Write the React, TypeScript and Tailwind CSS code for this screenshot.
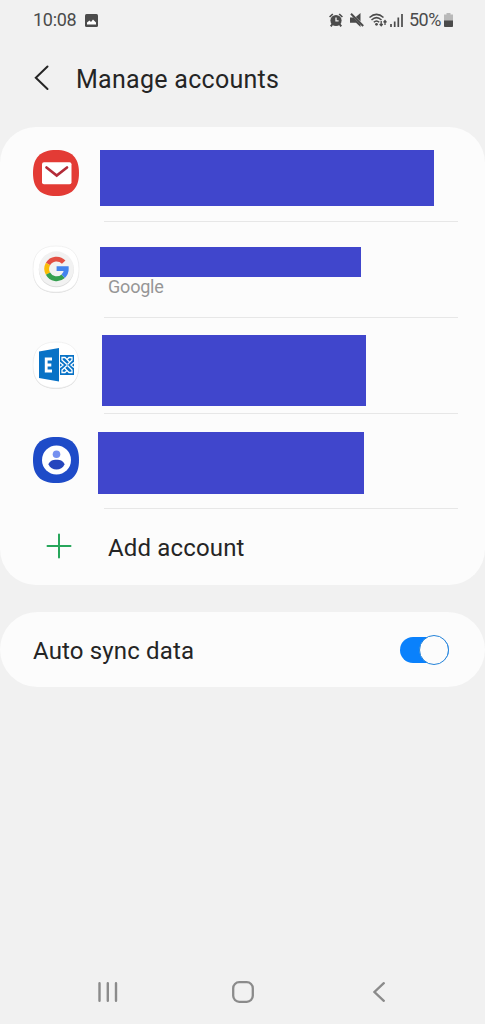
import React from "react";

const SQUIRCLE = "M23 0C38.500 0 46 7.500 46 23S38.500 46 23 46 0 38.500 0 23 7.500 0 23 0Z";

const StatusBar: React.FC = () => (
  <div className="flex h-10 items-center pl-[33px] pr-8 text-[#4b4b4b]">
    <span className="w-[44px] whitespace-nowrap text-[18px] leading-none tracking-[-0.3px]">10:08</span>
    <svg className="ml-2" width="13" height="13" viewBox="0 0 13 13">
      <rect width="13" height="13" rx="1.500" fill="currentColor" />
      <path d="M2 10.500V8.500L4.500 6.500 6 8 8 5.500 11 8.500V10.500Z" fill="#fff" />
    </svg>
    <div className="ml-auto flex items-center">
      <svg className="overflow-visible" width="14" height="14" viewBox="0 0 14 14" fill="none" stroke="currentColor">
        <circle cx="7" cy="7.500" r="5.600" fill="currentColor" stroke="none" />
        <path d="M.6 4 3.800 1M13.400 4 10.200 1" strokeWidth="1.700" />
        <path d="M3.500 11 1.800 13.300M10.500 11 12.200 13.300" strokeWidth="2" />
        <path d="M7 4.500V7.800H9.600" stroke="#f1f1f1" strokeWidth="1.300" />
      </svg>
      <svg className="ml-[7px]" width="14" height="14" viewBox="0 0 14 14">
        <path d="M0 4.500H3.500L10.500 11.500V14L6 9.700H0ZM5.800 4 10.500 0V8.600Z" fill="currentColor" />
        <path d="M1 .8 13.200 13" stroke="currentColor" strokeWidth="2" />
      </svg>
      <svg className="ml-[5px]" width="18" height="14" viewBox="0 0 18 14" fill="none" stroke="currentColor">
        <path d="M.5 4.500Q7.500-1.800 14.500 4.500M2.500 7Q7.500 2.300 12.500 7M4.800 9.300Q7.500 6.700 10.200 9.300" strokeWidth="1.500" />
        <circle cx="7.500" cy="11.300" r="1.400" fill="currentColor" stroke="none" />
        <path d="M12.200 8V12.500M10.700 11 12.200 12.700 13.700 11M16 12V7.800M14.500 9.300 16 7.500 17.500 9.300" strokeWidth="1.300" />
      </svg>
      <svg className="ml-[3px]" width="13" height="14" viewBox="0 0 13 14" stroke="currentColor" strokeWidth="1.700">
        <path d="M1 11V14M4.700 8.500V14M8.300 4.500V14M12 1V14" />
      </svg>
      <span className="ml-[6px] w-[34px] whitespace-nowrap text-[18px] leading-none tracking-[-0.5px]">50%</span>
      <svg className="ml-px" width="9" height="14" viewBox="0 0 9 14">
        <path d="M2.500 0H6.500V1.500H9V14H0V1.500H2.500Z" fill="#b9b9b9" />
        <path d="M0 7.500H9V12.500Q9 14 8 14H1Q0 14 0 12.500Z" fill="currentColor" />
      </svg>
    </div>
  </div>
);

const MailIcon: React.FC = () => (
  <svg width="46" height="46" viewBox="0 0 46 46">
    <path d={SQUIRCLE} fill="#e33b35" />
    <rect x="9" y="12.300" width="29.500" height="22" rx="2" fill="#fff" />
    <path d="M13.500 17.500 23.700 25.500 34 17.500" fill="none" stroke="#b32b38" strokeWidth="2.700" strokeLinecap="round" />
  </svg>
);

const GoogleIcon: React.FC = () => (
  <svg className="overflow-visible" width="46" height="46" viewBox="0 0 46 46">
    <path d={SQUIRCLE} fill="#d9d9d9" transform="translate(0 .7)" />
    <path d={SQUIRCLE} fill="#fff" stroke="#e9e9e9" strokeWidth=".6" />
    <circle cx="23.300" cy="23.800" r="17.500" fill="#dcdcdc" />
    <circle cx="23.300" cy="22.800" r="17.500" fill="#f2f2f2" />
    <g fill="none" strokeWidth="4.800" transform="translate(.6 0)">
      <path d="M14.400 18A9.800 9.800 0 0 1 30.100 16.200" stroke="#e34f43" />
      <path d="M14.400 27.600A9.800 9.800 0 0 1 14.400 18" stroke="#fbbc05" />
      <path d="M29.600 30.200A9.800 9.800 0 0 1 14.400 27.600" stroke="#34a04f" />
      <path d="M23 22.700H32.700A9.800 9.800 0 0 1 29.600 30.200" stroke="#4383ee" />
    </g>
  </svg>
);

const ExchangeIcon: React.FC = () => (
  <svg className="overflow-visible" width="46" height="46" viewBox="0 0 46 46">
    <path d={SQUIRCLE} fill="#d9d9d9" transform="translate(0 .7)" />
    <path d={SQUIRCLE} fill="#fff" stroke="#e9e9e9" strokeWidth=".6" />
    <path d="M6 9.500 26 6V39.500L6 36Z" fill="#0872c6" />
    <path d="M19 17H13.200V29H19M13.200 23H18.300" fill="none" stroke="#fff" strokeWidth="2.800" />
    <rect x="27" y="13" width="14" height="20" fill="#0872c6" />
    {/* four interlocking hooks */}
    <g fill="none" stroke="#fff" strokeWidth="1.300">
      <path d="M34 22.500 29 18V15.500H32L36.500 20" />
      <path d="M34.500 22.500 39 18V15.500H36L34 17.500" />
      <path d="M34 23.500 29 28V30.500H32L34 28.500" />
      <path d="M34.500 23.500 39 28V30.500H36L31.500 26" />
      <path d="M27 20.500 30 23 27 25.500M41 20.500 38 23 41 25.500" />
    </g>
  </svg>
);

const ContactIcon: React.FC = () => (
  <svg className="overflow-visible" width="46" height="46" viewBox="0 0 46 46">
    <path d={SQUIRCLE} fill="#1e4bc8" />
    <circle cx="23.500" cy="23" r="14.500" fill="#fff" />
    <circle cx="23.500" cy="17.300" r="3.800" fill="#7590f0" />
    <path d="M15.500 27.500C16.500 24 19.500 22.700 23.500 22.700S30.500 24 31.500 27.500C30 31 27 32.500 23.500 32.500S17 31 15.500 27.500Z" fill="#2545bd" />
  </svg>
);

const Divider: React.FC = () => <div className="ml-[104px] mr-[27px] h-px shrink-0 bg-[#e7e7e7]" />;

const App: React.FC = () => {
  return (
    <div
      className="flex h-[1024px] w-[485px] flex-col overflow-hidden bg-[#f1f1f1] text-[#252525]"
      style={{ fontFamily: "Roboto, sans-serif" }}
    >
      <StatusBar />

      <header className="flex h-[87px] items-center pb-2 pl-[34px]">
        <svg className="mb-1" width="16" height="26" viewBox="0 0 16 26" fill="none" stroke="currentColor" strokeWidth="2" strokeLinecap="round">
          <path d="M13.500 1.500 1.800 12.700 13.500 24" />
        </svg>
        <h1 className="ml-[26px] text-[25px] leading-none tracking-[0.28px]">Manage accounts</h1>
      </header>

      <section className="rounded-[36px] bg-[#fcfcfc]">
        <div className="flex h-[95px] flex-col">
          <div className="flex flex-1 items-start pl-[33px] pt-[23px]">
            <MailIcon />
            <div className="ml-[21px] h-14 w-[334px] bg-[#4046cc]" />
          </div>
          <Divider />
        </div>

        <div className="flex h-24 flex-col">
          <div className="flex flex-1 items-start pl-[33px] pt-6">
            <GoogleIcon />
            <div className="ml-[21px] mt-px">
              <div className="h-[30px] w-[261px] bg-[#4046cc]" />
              <p className="ml-2 text-[18px] leading-5 tracking-[-0.2px] text-[#969696]">Google</p>
            </div>
          </div>
          <Divider />
        </div>

        <div className="flex h-24 flex-col">
          <div className="flex flex-1 items-start pl-[33px] pt-[17px]">
            <span className="mt-[7px]"><ExchangeIcon /></span>
            <div className="ml-[23px] h-[71px] w-[264px] bg-[#4046cc]" />
          </div>
          <Divider />
        </div>

        <div className="flex h-[95px] flex-col">
          <div className="flex flex-1 items-start pl-[33px] pt-[18px]">
            <span className="mt-[5px]"><ContactIcon /></span>
            <div className="ml-[19px] h-[62px] w-[266px] bg-[#4046cc]" />
          </div>
          <Divider />
        </div>

        <div className="flex h-[76px] items-center pl-[46px]">
          <svg className="mb-0.5" width="26" height="26" viewBox="0 0 26 26" stroke="#27a65b" strokeWidth="2" strokeLinecap="round">
            <path d="M13 1.500V24.500M1.500 13H24.500" />
          </svg>
          <span className="ml-9 mt-px text-[24px] leading-none tracking-[0.15px]">Add account</span>
        </div>
      </section>

      <section className="mt-[27px] flex h-[75px] items-center justify-between rounded-full bg-[#fcfcfc] pl-[33px] pr-9">
        <span className="mt-0.5 text-[24px] leading-none tracking-[0.15px]">Auto sync data</span>
        <div className="flex h-[26px] w-[49px] items-center justify-end rounded-full bg-[#0a81fc]">
          <div className="h-[30px] w-[30px] shrink-0 rounded-full border border-[#2583d8] bg-[#fcfcfc]" />
        </div>
      </section>

      <nav className="mt-auto flex h-16 items-center text-[#8b8b8b]">
        <svg className="ml-[98px]" width="20" height="20" viewBox="0 0 20 20" stroke="currentColor" strokeWidth="2.400" strokeLinecap="round">
          <path d="M1.500 1.200V18.800M9.800 1.200V18.800M18 1.200V18.800" />
        </svg>
        <svg className="ml-[114px]" width="22" height="22" viewBox="0 0 22 22" fill="none" stroke="currentColor" strokeWidth="2.300">
          <rect x="1.200" y="1.200" width="19.600" height="19.600" rx="6" />
        </svg>
        <svg className="ml-[119px]" width="12" height="20" viewBox="0 0 12 20" fill="none" stroke="currentColor" strokeWidth="2.300" strokeLinecap="round">
          <path d="M10.800 1.200 1.500 10 10.800 18.800" />
        </svg>
      </nav>
    </div>
  );
};

export default App;
